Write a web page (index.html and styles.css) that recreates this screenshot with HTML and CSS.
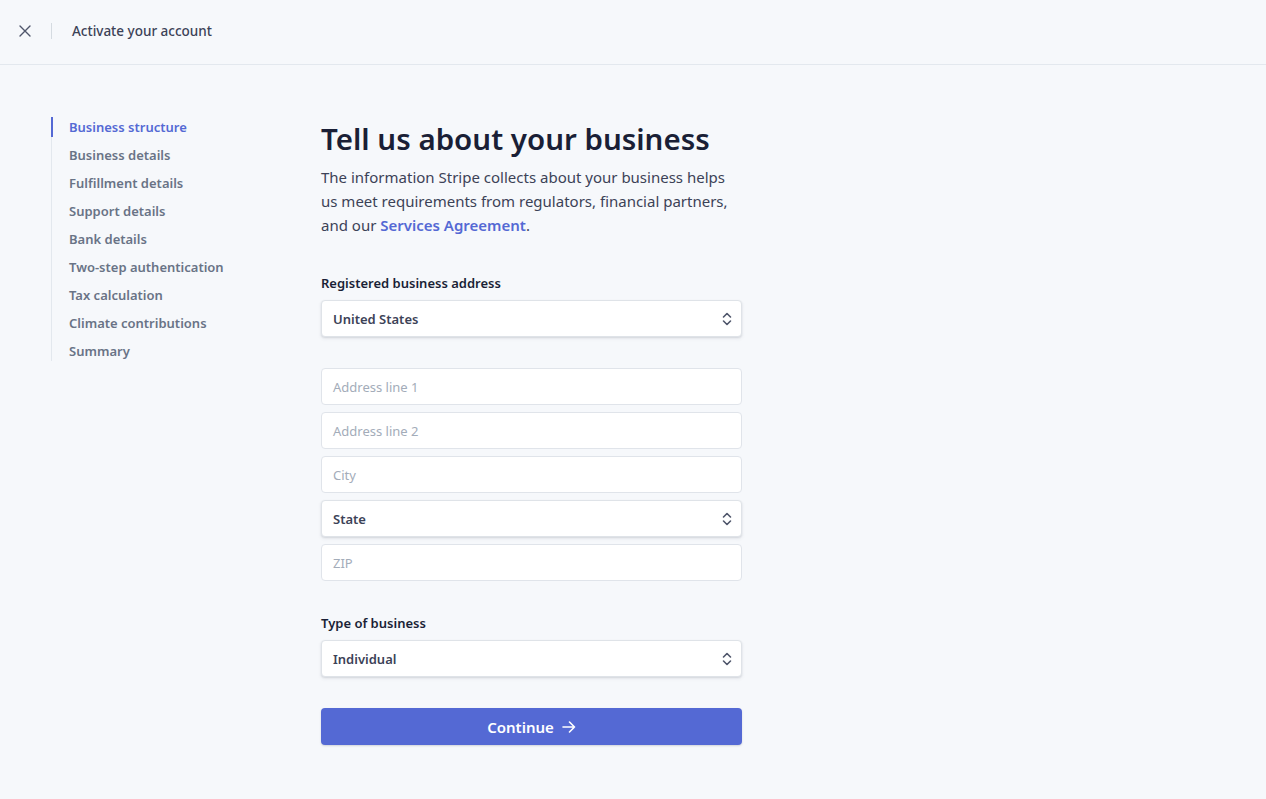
FILE: index.html
```html
<!DOCTYPE html>
<html>
<head>
<meta charset="utf-8">
<link rel="stylesheet" href="styles.css">
</head>
<body>
<header class="topbar">
  <button class="close" aria-label="Close">
    <svg width="12" height="12" viewBox="0 0 12 12"><path d="M1 1L11 11M11 1L1 11" stroke="#4f566b" stroke-width="1.4" stroke-linecap="round"/></svg>
  </button>
  <span class="divider"></span>
  <span class="title">Activate your account</span>
</header>
<div class="layout">
  <nav class="steps">
    <a class="step active">Business structure</a>
    <a class="step">Business details</a>
    <a class="step">Fulfillment details</a>
    <a class="step">Support details</a>
    <a class="step">Bank details</a>
    <a class="step">Two-step authentication</a>
    <a class="step">Tax calculation</a>
    <a class="step">Climate contributions</a>
    <a class="step">Summary</a>
  </nav>
  <main class="form">
    <h1>Tell us about your business</h1>
    <p class="intro">The information Stripe collects about your business helps us meet requirements from regulators, financial partners, and our <span class="link">Services Agreement</span>.</p>

    <div class="group">
      <div class="label">Registered business address</div>
      <div class="select"><span>United States</span><svg class="chev" width="10" height="14" viewBox="0 0 10 14"><path d="M1.5 5L5 1.5L8.5 5M1.5 9L5 12.5L8.5 9" fill="none" stroke="#4f566b" stroke-width="1.6" stroke-linecap="round" stroke-linejoin="round"/></svg></div>
    </div>

    <div class="fields">
      <div class="input">Address line 1</div>
      <div class="input">Address line 2</div>
      <div class="input">City</div>
      <div class="select"><span>State</span><svg class="chev" width="10" height="14" viewBox="0 0 10 14"><path d="M1.5 5L5 1.5L8.5 5M1.5 9L5 12.5L8.5 9" fill="none" stroke="#4f566b" stroke-width="1.6" stroke-linecap="round" stroke-linejoin="round"/></svg></div>
      <div class="input">ZIP</div>
    </div>

    <div class="group type">
      <div class="label">Type of business</div>
      <div class="select"><span>Individual</span><svg class="chev" width="10" height="14" viewBox="0 0 10 14"><path d="M1.5 5L5 1.5L8.5 5M1.5 9L5 12.5L8.5 9" fill="none" stroke="#4f566b" stroke-width="1.6" stroke-linecap="round" stroke-linejoin="round"/></svg></div>
    </div>

    <button class="continue">Continue <svg width="14" height="12" viewBox="0 0 14 12"><path d="M1 6H12.5M7.5 1L12.5 6L7.5 11" fill="none" stroke="#fff" stroke-width="1.6" stroke-linecap="round" stroke-linejoin="round"/></svg></button>
  </main>
</div>
</body>
</html>
```
FILE: styles.css
```css
* { box-sizing: border-box; }
html, body { margin: 0; padding: 0; }
body {
  background: #f6f8fb;
  font-family: "Noto Sans", "Open Sans", sans-serif;
  color: #3c4257;
  height: 799px;
  overflow: hidden;
}
.topbar {
  height: 65px;
  border-bottom: 1px solid #e3e8ee;
  display: flex;
  align-items: center;
  padding-left: 19px;
}
.close {
  border: 0;
  background: none;
  padding: 0;
  width: 12px;
  height: 12px;
  display: flex;
  margin-top: -2px;
}
.divider {
  width: 1px;
  height: 16px;
  background: #d5dbe1;
  margin-left: 20px;
  margin-right: 20px;
  margin-top: -2px;
}
.title {
  font-size: 13.5px;
  font-weight: 500;
  color: #3c4257;
  margin-top: -2px;
}
.layout {
  display: flex;
  padding-top: 52px;
  padding-left: 51px;
}
.steps {
  width: 270px;
  display: flex;
  flex-direction: column;
  border-left: 1px solid #e3e8ee;
  align-self: flex-start;
}
.step {
  font-size: 13px;
  font-weight: 600;
  color: #697386;
  height: 28px;
  line-height: 20px;
  padding-left: 16px;
  margin-left: -1px;
  border-left: 2px solid transparent;
}
.step:last-child { height: 20px; }
.step.active {
  color: #5469d4;
  border-left-color: #5469d4;
  height: 20px;
  margin-bottom: 8px;
}
.form {
  width: 421px;
  display: flex;
  flex-direction: column;
}
h1 {
  margin: 2px 0 0;
  font-size: 29.5px;
  line-height: 40px;
  font-weight: 600;
  color: #1a1f36;
}
.intro {
  margin: 6px 0 0;
  font-size: 15px;
  line-height: 24px;
  color: #3c4257;
  width: 421px;
}
.link { color: #5469d4; font-weight: 600; }
.group { margin-top: 36px; }
.label {
  font-size: 13px;
  font-weight: 600;
  color: #1a1f36;
  line-height: 20px;
  margin-bottom: 7px;
}
.select, .input {
  height: 37px;
  background: #fff;
  border-radius: 4px;
  display: flex;
  align-items: center;
  justify-content: space-between;
  padding: 0 11px;
  font-size: 13px;
}
.select {
  font-weight: 600;
  color: #3c4257;
  border: 1px solid #dfe3e8;
  box-shadow: 0 1px 2px rgba(60,66,87,0.14), 0 2px 4px rgba(60,66,87,0.06);
}
.select .chev { margin-right: -2px; }
.input {
  color: #a3acb9;
  border: 1px solid #e0e4ea;
}
.fields {
  display: flex;
  flex-direction: column;
  gap: 7px;
  margin-top: 31px;
}
.type { margin-top: 32px; }
.continue {
  margin-top: 31px;
  height: 37px;
  border: 0;
  border-radius: 4px;
  background: #5469d4;
  color: #fff;
  font-family: inherit;
  font-size: 15px;
  font-weight: 600;
  display: flex;
  align-items: center;
  justify-content: center;
  gap: 8px;
  padding: 0;
  box-shadow: 0 1px 2px rgba(60,66,87,0.2);
}
```
